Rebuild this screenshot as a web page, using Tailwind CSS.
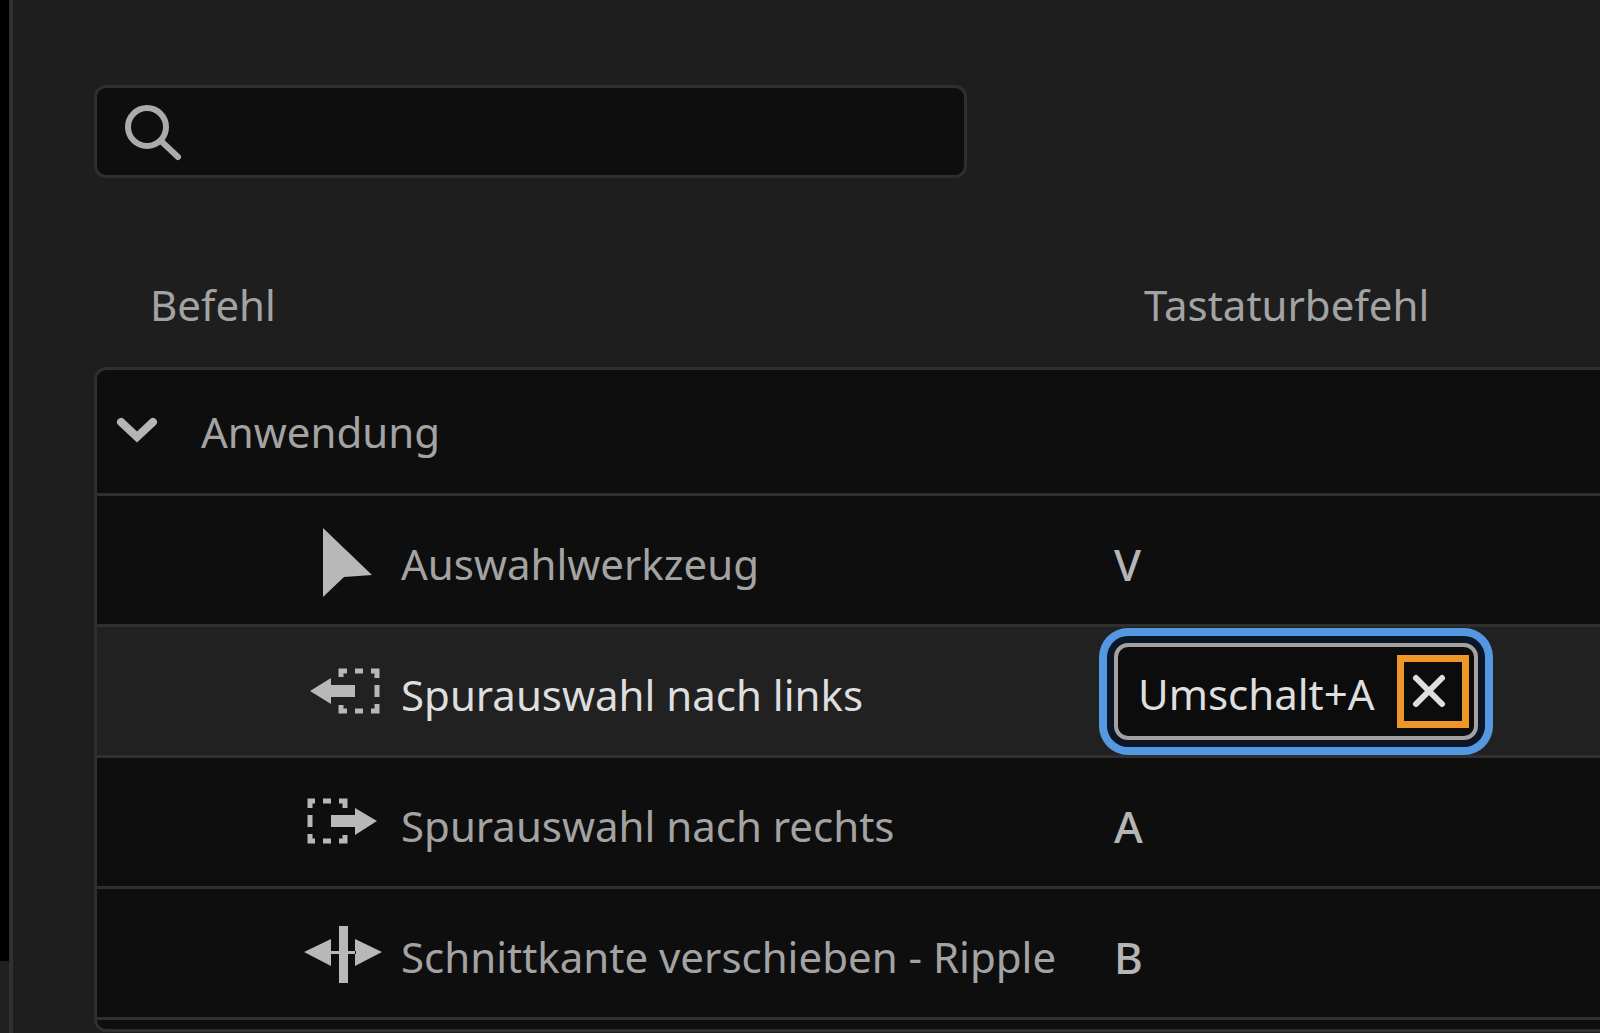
<!DOCTYPE html>
<html lang="de">
<head>
    <meta charset="UTF-8">
    <meta name="viewport" content="width=device-width, initial-scale=1.0">
    <title>Tastaturbefehle</title>
    <script src="https://cdn.jsdelivr.net/npm/@tailwindcss/browser@4"></script>
</head>
<body class="flex h-screen overflow-hidden bg-[#1e1e1e] font-['Noto_Sans',sans-serif] text-[42px] leading-[56px] text-[#a3a3a3]">

<!-- Edge of the window behind -->
<aside class="flex flex-col w-[13px] shrink-0 bg-black border-r-4 border-[#303030]">
  <div class="mt-auto h-[72px] bg-[#202022]"></div>
</aside>

<main class="flex-1 min-w-0 pl-[81px] pt-[85px]">
  <label class="flex items-center gap-4 w-[873px] h-[93px] pl-7 pr-4 bg-[#0e0e0e] border-3 border-[#2f2f2f] rounded-xl">
    <svg class="w-[60px] h-[60px] shrink-0" viewBox="0 0 60 60" fill="none" stroke="#ababab" stroke-width="6" stroke-linecap="round">
      <circle cx="22" cy="25" r="19"/>
      <path d="M36 39 53 55"/>
    </svg>
    <input type="search" aria-label="Suchen" class="flex-1 min-w-0 bg-transparent outline-none">
  </label>

  <table class="w-full table-fixed border-separate border-spacing-0 text-left">
    <thead>
      <tr class="h-[189px]">
        <th class="w-[1020px] pl-14 pt-16 align-middle font-normal">Befehl</th>
        <th class="pl-[30px] pt-16 align-middle font-normal">Tastaturbefehl</th>
      </tr>
    </thead>
    <tbody class="bg-[#0e0e0e]">
      <tr class="h-[129px]">
        <td colspan="2" class="border-3 border-r-0 border-[#2f2f2f] rounded-tl-xl">
          <button class="flex items-center gap-[42px] pl-[18px]">
            <svg class="w-[44px] h-[32px]" viewBox="0 0 44 32" fill="none" stroke="#b5b5b5" stroke-width="8" stroke-linecap="round">
              <path d="M6 6 22 21 38 6"/>
            </svg>
            Anwendung
          </button>
        </td>
      </tr>
      <tr class="h-[131px]">
        <td class="border-l-3 border-b-3 border-[#2f2f2f]">
          <div class="flex items-center gap-[18px] pl-[206px]">
            <svg class="w-20 h-20" viewBox="0 0 80 80" fill="#b8b8b8"><path d="M20 8V77L41 57 69 55Z"/></svg>
            <span class="pt-2">Auswahlwerkzeug</span>
          </div>
        </td>
        <td class="pt-2 border-b-3 border-[#2f2f2f] text-[44px] font-medium text-[#b5b5b5]">V</td>
      </tr>
      <tr class="h-[131px] bg-[#212121] text-[#dedede]">
        <td class="border-l-3 border-b-3 border-[#2f2f2f]">
          <div class="flex items-center gap-[18px] pl-[206px]">
            <svg class="w-20 h-20" viewBox="0 0 80 80" fill="#b8b8b8">
              <path d="M7 40 28 27V34H52V46H28V53Z"/>
              <path fill="none" stroke="#b8b8b8" stroke-width="5" d="M38 26V20H44M52 20H60M68 20H74V27M74 34V46M74 53V60H68M60 60H52M44 60H38V54"/>
            </svg>
            <span class="pt-2">Spurauswahl nach links</span>
          </div>
        </td>
        <td class="border-b-3 border-[#2f2f2f]">
          <div class="flex items-center w-[364px] h-[97px] pl-5 pr-[5px] bg-[#0c0c0c] border-4 border-[#a5a1a1] rounded-[14px] shadow-[0_0_0_7px_#0b1726,0_0_0_15px_#5598e2]">
            <input type="text" value="Umschalt+A" aria-label="Tastaturbefehl für Spurauswahl nach links" class="flex-1 min-w-0 pt-1.5 bg-transparent outline-none">
            <button aria-label="Entfernen" class="flex items-center justify-center w-[72px] h-[73px] pr-2 shrink-0 border-[7px] border-[#ee9628]">
              <svg class="w-9 h-9" viewBox="0 0 36 36" stroke="#dedede" stroke-width="6" stroke-linecap="round"><path d="M5 5 31 31M31 5 5 31"/></svg>
            </button>
          </div>
        </td>
      </tr>
      <tr class="h-[131px]">
        <td class="border-l-3 border-b-3 border-[#2f2f2f]">
          <div class="flex items-center gap-[18px] pl-[206px]">
            <svg class="w-20 h-20" viewBox="0 0 80 80" fill="#b8b8b8">
              <path d="M74 39 52 26V33H28V45H52V53Z"/>
              <path fill="none" stroke="#b8b8b8" stroke-width="5" d="M42 26V19H36M28 19H20M12 19H7V26M7 33V45M7 52V59H12M20 59H28M36 59H42V53"/>
            </svg>
            <span class="pt-2">Spurauswahl nach rechts</span>
          </div>
        </td>
        <td class="pt-2 border-b-3 border-[#2f2f2f] text-[44px] font-medium text-[#b5b5b5]">A</td>
      </tr>
      <tr class="h-[131px]">
        <td class="border-l-3 border-b-3 border-[#2f2f2f]">
          <div class="flex items-center gap-[18px] pl-[206px] whitespace-nowrap">
            <svg class="w-20 h-20" viewBox="0 0 80 80" fill="#b8b8b8">
              <path d="M1 39 28 26V53ZM79 39 52 26V53ZM36 13H45V70H36ZM27 38H53V41H27Z"/>
            </svg>
            <span class="pt-2">Schnittkante verschieben - Ripple</span>
          </div>
        </td>
        <td class="pt-2 border-b-3 border-[#2f2f2f] text-[44px] font-medium text-[#b5b5b5]">B</td>
      </tr>
      <tr class="h-3">
        <td colspan="2" class="border-l-3 border-b-3 border-[#2f2f2f] rounded-bl-xl"></td>
      </tr>
    </tbody>
  </table>
</main>

</body>
</html>
